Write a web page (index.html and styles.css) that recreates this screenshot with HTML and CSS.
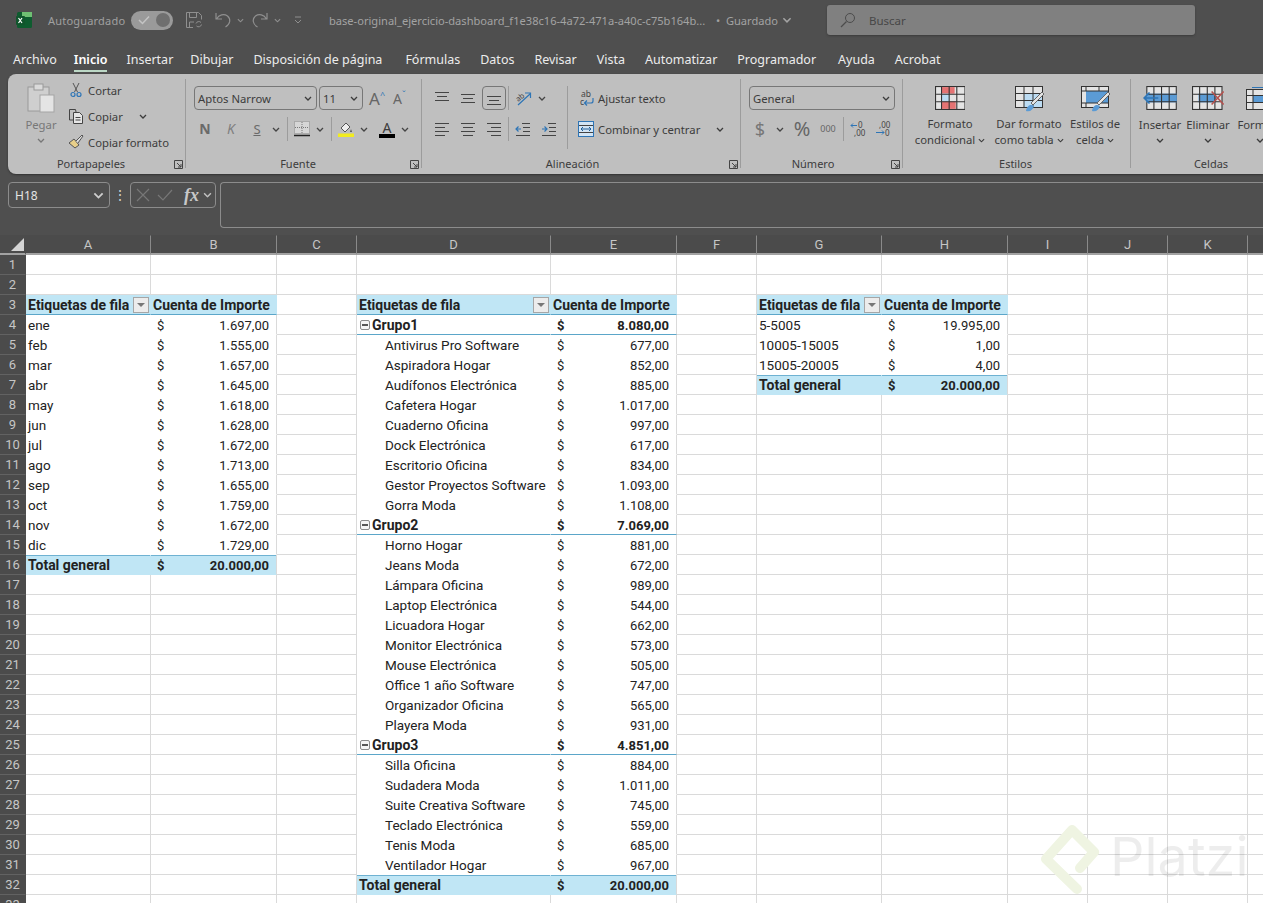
FILE: index.html
```html
<!DOCTYPE html>
<html lang="es">
<head>
  <meta charset="UTF-8">
  <title>Excel - dashboard</title>
  <link rel="stylesheet" href="styles.css">
</head>
<body>

<!-- shared icons -->
<svg class="sprite">
  <symbol id="chev" viewBox="0 0 8 5"><path d="M1 1l3 3 3-3" fill="none" stroke="currentColor" stroke-width="1.3"/></symbol>
  <symbol id="launch" viewBox="0 0 9 9"><path d="M.5.5h8v8h-8zM3 3l4 4M7 4v3H4" fill="none" stroke="#444"/></symbol>
  <symbol id="al-top" viewBox="0 0 16 16"><path d="M1 2.5h14M3 6.5h10M1 10.5h14" stroke="#444" fill="none"/></symbol>
  <symbol id="al-mid" viewBox="0 0 16 16"><path d="M1 4.5h14M3 8.5h10M1 12.5h14" stroke="#444" fill="none"/></symbol>
  <symbol id="al-bot" viewBox="0 0 16 16"><path d="M1 6.5h14M3 10.5h10M1 14.5h14" stroke="#444" fill="none"/></symbol>
  <symbol id="h-left" viewBox="0 0 16 16"><path d="M1 2.5h14M1 6.5h10M1 10.5h14M1 14.5h10" stroke="#444" fill="none"/></symbol>
  <symbol id="h-mid" viewBox="0 0 16 16"><path d="M1 2.5h14M3 6.5h10M1 10.5h14M3 14.5h10" stroke="#444" fill="none"/></symbol>
  <symbol id="h-right" viewBox="0 0 16 16"><path d="M1 2.5h14M5 6.5h10M1 10.5h14M5 14.5h10" stroke="#444" fill="none"/></symbol>
</svg>

<!-- Title bar -->
<div class="titlebar">
  <svg class="xl-logo" viewBox="0 0 16 16">
    <rect x="1" y="0" width="15" height="16" rx="1.5" fill="#0e5c2f"/>
    <rect x="6" y="0" width="10" height="5" fill="#6fbf73"/>
    <rect x="0" y="4" width="9" height="9" rx="1" fill="#10552c"/>
    <path d="M2.5 6l3.5 5M6 6l-3.5 5" stroke="#fff" stroke-width="1.2"/>
  </svg>
  <span class="autosave">Autoguardado</span>
  <span class="toggle">
    <svg viewBox="0 0 12 10" width="12" height="10"><path d="M1 5l3.5 3.5L11 1.500" fill="none" stroke="#c4c4c4" stroke-width="1.5"/></svg>
    <i class="knob"></i>
  </span>
  <svg class="qa save" viewBox="0 0 18 18"><path d="M1.500 1.500h12l3 3v4M8 16.500H1.500v-15M4.500 1.500v5h7v-5M4.500 16v-5H9" fill="none" stroke="#8f8f8f"/><path d="M11 12.500a3 3 0 0 1 5-1M16.500 13.500a3 3 0 0 1-5 1.500" fill="none" stroke="#8f8f8f"/></svg>
  <svg class="qa undo" viewBox="0 0 18 18"><path d="M2 2v6h6M2.500 8C5 3.500 10 2.500 13.500 5c3.500 3 3 8-2 11" fill="none" stroke="#8f8f8f" stroke-width="1.2"/></svg>
  <svg class="chev-s" viewBox="0 0 8 5"><use href="#chev"/></svg>
  <svg class="qa redo" viewBox="0 0 18 18"><path d="M16 2v6h-6M15.500 8C13 3.500 8 2.500 4.500 5c-3.500 3-3 8 2 11" fill="none" stroke="#8f8f8f" stroke-width="1.2"/></svg>
  <svg class="chev-s" viewBox="0 0 8 5"><use href="#chev"/></svg>
  <svg class="custom" viewBox="0 0 8 8"><path d="M1 1h6M1 4l3 3 3-3" fill="none" stroke="#8f8f8f"/></svg>
  <span class="doc-title">base-original_ejercicio-dashboard_f1e38c16-4a72-471a-a40c-c75b164b...</span>
  <span class="doc-state">•&nbsp; Guardado</span>
  <svg class="chev-t" viewBox="0 0 8 5"><use href="#chev"/></svg>
  <div class="search">
    <svg viewBox="0 0 16 16" width="16" height="16"><circle cx="10" cy="6" r="4.500" fill="none" stroke="#4c4c4c"/><path d="M6.500 9.500L1 15" stroke="#4c4c4c" stroke-width="1.300"/></svg>
    <span>Buscar</span>
  </div>
</div>

<!-- Tabs -->
<div class="tabs">
  <span>Archivo</span>
  <span class="active">Inicio</span>
  <span>Insertar</span>
  <span class="tab-dibujar">Dibujar</span>
  <span class="tab-disp">Disposición de página</span>
  <span>Fórmulas</span>
  <span>Datos</span>
  <span>Revisar</span>
  <span>Vista</span>
  <span>Automatizar</span>
  <span>Programador</span>
  <span class="tab-ayuda">Ayuda</span>
  <span>Acrobat</span>
</div>

<!-- Ribbon -->
<div class="ribbon">

  <div class="group g-clip">
    <div class="g-body">
      <div class="big pegar">
        <svg class="i-paste" viewBox="0 0 28 30">
          <rect x="1" y="4" width="21" height="24" fill="#cfcfcf" stroke="#9a9a9a"/>
          <rect x="7" y="1" width="9" height="6" fill="#dadada" stroke="#9a9a9a"/>
          <rect x="13" y="12" width="14" height="17" fill="#e4e4e4" stroke="#a5a5a5"/>
        </svg>
        <span>Pegar</span>
        <svg class="chev-r" viewBox="0 0 8 5"><use href="#chev"/></svg>
      </div>
      <div class="clip-list">
        <div class="clip-row">
          <svg viewBox="0 0 16 16" width="16" height="16"><path d="M5 1l4.500 9M11 1L6.500 10" stroke="#555" fill="none"/><circle cx="5" cy="12.500" r="2" fill="none" stroke="#2e75b6" stroke-width="1.200"/><circle cx="11" cy="12.500" r="2" fill="none" stroke="#2e75b6" stroke-width="1.200"/></svg>
          <span>Cortar</span>
        </div>
        <div class="clip-row">
          <svg viewBox="0 0 16 16" width="16" height="16"><path d="M5 12H1.500V1.500h6L8 4" fill="none" stroke="#444"/><path d="M5.500 4.500h6l3 3v8h-9zM7.500 9.500h5M7.500 12h5" fill="#e6e6e6" stroke="#444"/></svg>
          <span>Copiar</span>
          <svg class="chev-c" viewBox="0 0 8 5"><use href="#chev"/></svg>
        </div>
        <div class="clip-row">
          <svg viewBox="0 0 16 16" width="16" height="16"><path d="M1 9l5-4 5 6-4 3z" fill="#e8cf8a" stroke="#555"/><path d="M8 7l6-6 1 1-5 7" fill="#ddd" stroke="#555"/></svg>
          <span>Copiar formato</span>
        </div>
      </div>
    </div>
    <div class="g-foot"><span>Portapapeles</span><svg class="launch" viewBox="0 0 9 9"><use href="#launch"/></svg></div>
  </div>
  <i class="g-sep"></i>

  <div class="group g-font">
    <div class="g-body col">
      <div class="tool-row">
        <div class="combo c-font"><span>Aptos Narrow</span><svg viewBox="0 0 8 5"><use href="#chev"/></svg></div>
        <div class="combo c-size"><span>11</span><svg viewBox="0 0 8 5"><use href="#chev"/></svg></div>
        <span class="grow">A<sup>^</sup></span>
        <span class="shrink">A<sup>ˇ</sup></span>
      </div>
      <div class="tool-row second shift">
        <b class="tool t26 dim">N</b>
        <i class="tool t26 dim k">K</i>
        <span class="tool t22 dim s">S</span>
        <svg class="chev-b" viewBox="0 0 8 5"><use href="#chev"/></svg>
        <i class="v-sep"></i>
        <svg class="ic16" viewBox="0 0 16 16"><path d="M.5.5h15v12H.5z" fill="#d6d6d6" stroke="#8a8a8a" stroke-dasharray="1 1"/><path d="M8 1v11M1 6.500h14" stroke="#777" stroke-dasharray="1 1"/><path d="M0 14.500h16" stroke="#222" stroke-width="1.500"/></svg>
        <svg class="chev-b" viewBox="0 0 8 5"><use href="#chev"/></svg>
        <i class="v-sep"></i>
        <svg class="ic16" viewBox="0 0 16 16"><path d="M3 7l5-5 4 4-5 5z" fill="#eee" stroke="#555"/><path d="M13 8l1 3h-2z" fill="#555"/><rect y="12.500" width="16" height="3.500" fill="#f2ec1e"/></svg>
        <svg class="chev-b" viewBox="0 0 8 5"><use href="#chev"/></svg>
        <span class="color-a">A</span>
        <svg class="chev-b" viewBox="0 0 8 5"><use href="#chev"/></svg>
      </div>
    </div>
    <div class="g-foot"><span>Fuente</span><svg class="launch" viewBox="0 0 9 9"><use href="#launch"/></svg></div>
  </div>
  <i class="g-sep"></i>

  <div class="group g-align">
    <div class="g-body">
      <div class="al-left">
        <div class="tool-row">
          <svg class="tool t26 ic" viewBox="-5 0 26 16"><use href="#al-top" width="16" height="16"/></svg>
          <svg class="tool t26 ic" viewBox="-5 0 26 16"><use href="#al-mid" width="16" height="16"/></svg>
          <span class="al-selected"><svg viewBox="0 0 16 16" width="16" height="16"><use href="#al-bot"/></svg></span>
          <i class="v-sep narrow"></i>
          <svg class="ic17" viewBox="0 0 17 17"><text x="1" y="10" font-size="7.500" fill="#444" font-family="Noto Sans, sans-serif" transform="rotate(-40 5 8)">ab</text><path d="M3 15L15 4M10 3h5.500v5" fill="none" stroke="#2e75b6" stroke-width="1.200"/></svg>
          <svg class="chev-b" viewBox="0 0 8 5"><use href="#chev"/></svg>
        </div>
        <div class="tool-row second">
          <svg class="tool t26 ic" viewBox="-5 0 26 16"><use href="#h-left" width="16" height="16"/></svg>
          <svg class="tool t26 ic" viewBox="-5 0 26 16"><use href="#h-mid" width="16" height="16"/></svg>
          <svg class="tool t26 ic" viewBox="-5 0 26 16"><use href="#h-right" width="16" height="16"/></svg>
          <i class="v-sep"></i>
          <svg class="ic16" viewBox="0 0 16 16"><path d="M7 2.500h8M8 6.500h7M8 10.500h7M1 14.500h14" stroke="#444"/><path d="M6 8H1M3.500 5.500L1 8l2.500 2.500" fill="none" stroke="#2e75b6" stroke-width="1.200"/></svg>
          <svg class="ic16 gap10" viewBox="0 0 16 16"><path d="M7 2.500h8M8 6.500h7M8 10.500h7M1 14.500h14" stroke="#444"/><path d="M1 8h5M3.500 5.500L6 8l-2.500 2.500" fill="none" stroke="#2e75b6" stroke-width="1.200"/></svg>
        </div>
      </div>
      <i class="v-sep tall"></i>
      <div class="al-right">
        <div class="clip-row">
          <svg class="ic-wrap" viewBox="0 0 16 18" width="16" height="18"><text x="3" y="8" font-size="8.500" fill="#444" font-family="Noto Sans, sans-serif">ab</text><text x="2" y="16" font-size="8.500" fill="#444" font-family="Noto Sans, sans-serif">c</text><path d="M15 9v3a2 2 0 0 1-2 2H7M9 11.500L6.500 14 9 16.500" fill="none" stroke="#2e75b6" stroke-width="1.200"/></svg>
          <span>Ajustar texto</span>
        </div>
        <div class="clip-row">
          <svg viewBox="0 0 16 16" width="16" height="16"><rect x=".5" y=".5" width="15" height="15" fill="#d3e5f5" stroke="#2e75b6"/><path d="M1 4.500h14M1 11.500h14" stroke="#444"/><path d="M3 8h10M5 6L3 8l2 2M11 6l2 2-2 2" fill="none" stroke="#1f5f99"/></svg>
          <span>Combinar y centrar</span>
          <svg class="chev-m" viewBox="0 0 8 5"><use href="#chev"/></svg>
        </div>
      </div>
    </div>
    <div class="g-foot"><span>Alineación</span><svg class="launch" viewBox="0 0 9 9"><use href="#launch"/></svg></div>
  </div>
  <i class="g-sep"></i>

  <div class="group g-num">
    <div class="g-body col">
      <div class="tool-row">
        <div class="combo c-num"><span>General</span><svg viewBox="0 0 8 5"><use href="#chev"/></svg></div>
      </div>
      <div class="tool-row second">
        <span class="tool t20 cur">$</span>
        <svg class="chev-b" viewBox="0 0 8 5"><use href="#chev"/></svg>
        <span class="tool t24 pct">%</span>
        <span class="tool t28 mil">000</span>
        <i class="v-sep"></i>
        <svg class="ic16" viewBox="0 0 16 16"><text x="8" y="7" font-size="8" fill="#444" font-family="Noto Sans, sans-serif">0</text><text x="4" y="15" font-size="8" fill="#444" font-family="Noto Sans, sans-serif">,00</text><path d="M7 4.500H1M3 2.500l-2 2 2 2" fill="none" stroke="#2e75b6"/></svg>
        <svg class="ic16 gap9" viewBox="0 0 16 16"><text x="4" y="7" font-size="8" fill="#444" font-family="Noto Sans, sans-serif">,00</text><text x="10" y="15" font-size="8" fill="#444" font-family="Noto Sans, sans-serif">0</text><path d="M1 11.500h8M7 9.500l2 2-2 2" fill="none" stroke="#2e75b6"/></svg>
      </div>
    </div>
    <div class="g-foot"><span>Número</span><svg class="launch" viewBox="0 0 9 9"><use href="#launch"/></svg></div>
  </div>
  <i class="g-sep"></i>

  <div class="group g-styles">
    <div class="g-body">
      <div class="big b79">
        <svg class="i-tbl" viewBox="0 0 28 22">
          <rect x=".5" y=".5" width="27" height="21" fill="#e4e4e4" stroke="#333"/>
          <rect x="6" y="1" width="12" height="6" fill="#e57373"/><rect x="6" y="14" width="13" height="7" fill="#e57373"/><rect x="6" y="7" width="7" height="7" fill="#bcdcf3"/>
          <path d="M1 7.500h27M1 14.500h27M6 1v21M13 1v21M20 1v21" stroke="#333" fill="none"/>
        </svg>
        <span class="two">Formato<br>condicional <svg class="chev-i" viewBox="0 0 8 5"><use href="#chev"/></svg></span>
      </div>
      <div class="big b76">
        <svg class="i-brush" viewBox="0 0 30 26">
          <rect x=".5" y=".5" width="27" height="21" fill="#e4e4e4" stroke="#333"/>
          <rect x="9" y="7" width="18" height="14" fill="#bcdcf3"/>
          <path d="M1 7.500h27M1 14.500h27M9 1v21M18 1v21" stroke="#333" fill="none"/>
          <path d="M16 17L27 6l2 2-11 11z" fill="#e4e4e4" stroke="#666"/>
          <path d="M11 25c1-6 5-7 8-5-1 4-4 6-8 5z" fill="#5b9bd5"/>
        </svg>
        <span class="two">Dar formato<br>como tabla <svg class="chev-i" viewBox="0 0 8 5"><use href="#chev"/></svg></span>
      </div>
      <div class="big b56">
        <svg class="i-brush" viewBox="0 0 30 26">
          <rect x=".5" y=".5" width="27" height="21" fill="#e4e4e4" stroke="#333"/>
          <rect x="5" y="5" width="22" height="12" fill="#5b9bd5"/>
          <path d="M1 5h26M5 1v4M18 1v4M1 17h26M5 17v5" stroke="#333" fill="none"/>
          <path d="M16 17L27 6l2 2-11 11z" fill="#e4e4e4" stroke="#666"/>
          <path d="M11 25c1-6 5-7 8-5-1 4-4 6-8 5z" fill="#5b9bd5"/>
        </svg>
        <span class="two">Estilos de<br>celda <svg class="chev-i" viewBox="0 0 8 5"><use href="#chev"/></svg></span>
      </div>
    </div>
    <div class="g-foot"><span>Estilos</span></div>
  </div>
  <i class="g-sep"></i>

  <div class="group g-cells">
    <div class="g-body">
      <div class="big b48">
        <svg class="i-tbl" viewBox="0 0 32 22">
          <rect x="3.500" y=".5" width="27" height="21" fill="#e4e4e4" stroke="#333"/>
          <rect x="3" y="7" width="28" height="8" fill="#5b9bd5"/>
          <path d="M4 7.500h27M4 14.500h27M10 1v21M17 1v21M24 1v21" stroke="#333" fill="none"/>
          <path d="M14 11H1M6 6l-5 5 5 5" fill="none" stroke="#2e75b6" stroke-width="1.500"/>
        </svg>
        <span>Insertar</span>
        <svg class="chev-r" viewBox="0 0 8 5"><use href="#chev"/></svg>
      </div>
      <div class="big b48">
        <svg class="i-tbl" viewBox="0 0 30 22">
          <rect x=".5" y=".5" width="27" height="21" fill="#e4e4e4" stroke="#333"/>
          <rect x="6" y="7" width="16" height="8" fill="#5b9bd5"/>
          <path d="M1 7.500h26M1 14.500h26M7 1v21M14 1v21M21 1v21" stroke="#333" fill="none"/>
          <path d="M18 5l11 12M29 5L18 17" stroke="#b5524f" stroke-width="1.500"/>
        </svg>
        <span>Eliminar</span>
        <svg class="chev-r" viewBox="0 0 8 5"><use href="#chev"/></svg>
      </div>
      <div class="big b56">
        <svg class="i-tbl" viewBox="0 0 28 24">
          <path d="M6 1.500h20" stroke="#2e75b6"/>
          <rect x=".5" y="3.500" width="27" height="20" fill="#e4e4e4" stroke="#333"/>
          <rect x="7" y="9" width="21" height="8" fill="#5b9bd5"/>
          <path d="M1 9.500h27M1 16.500h27M7 4v20" stroke="#333" fill="none"/>
        </svg>
        <span>Formato</span>
        <svg class="chev-r" viewBox="0 0 8 5"><use href="#chev"/></svg>
      </div>
    </div>
    <div class="g-foot"><span>Celdas</span></div>
  </div>
</div>

<!-- Formula bar -->
<div class="formula-bar">
  <div class="name-box"><span>H18</span><svg viewBox="0 0 8 5"><use href="#chev"/></svg></div>
  <span class="dots">⋮</span>
  <div class="fx-box">
    <svg viewBox="0 0 14 14" width="14" height="14"><path d="M1 1l12 12M13 1L1 13" stroke="#777" stroke-width="1.200"/></svg>
    <svg viewBox="0 0 16 14" width="16" height="14"><path d="M1 7l5 5L15 2" fill="none" stroke="#777" stroke-width="1.200"/></svg>
    <span class="fx">fx</span>
    <svg class="fx-chev" viewBox="0 0 8 5"><use href="#chev"/></svg>
  </div>
  <div class="formula-input"></div>
</div>

<!-- Sheet -->
<div class="sheet">
  <table class="grid">
    <colgroup>
      <col class="c-rh"><col class="c125"><col class="c126"><col class="c80"><col class="c194"><col class="c126"><col class="c80">
      <col class="c125"><col class="c126"><col class="c80"><col class="c80"><col class="c80"><col class="c80">
    </colgroup>
    <tbody id="sheetBody"></tbody>
  </table>
  <!-- watermark -->
  <div class="watermark">
    <svg viewBox="0 0 60 72" width="60" height="72"><path d="M37 66L6 36 32 7l22 22-14 16" fill="none" stroke="#eff4e2" stroke-width="10" stroke-linejoin="round" stroke-linecap="round"/></svg>
    <span>Platzi</span>
  </div>
</div>

<script>
  const columns = ["A", "B", "C", "D", "E", "F", "G", "H", "I", "J", "K", ""];
  const totalRows = 33;

  // type: h = header, g = group, t = total, i = indented item, blank = plain row
  const pivots = [
    { col: 0, row: 3, rows: [
      ["Etiquetas de fila", "Cuenta de Importe", "h"],
      ["ene", "1.697,00"], ["feb", "1.555,00"], ["mar", "1.657,00"], ["abr", "1.645,00"],
      ["may", "1.618,00"], ["jun", "1.628,00"], ["jul", "1.672,00"], ["ago", "1.713,00"],
      ["sep", "1.655,00"], ["oct", "1.759,00"], ["nov", "1.672,00"], ["dic", "1.729,00"],
      ["Total general", "20.000,00", "t"]
    ]},
    { col: 3, row: 3, rows: [
      ["Etiquetas de fila", "Cuenta de Importe", "h"],
      ["Grupo1", "8.080,00", "g"],
      ["Antivirus Pro Software", "677,00", "i"], ["Aspiradora Hogar", "852,00", "i"],
      ["Audífonos Electrónica", "885,00", "i"], ["Cafetera Hogar", "1.017,00", "i"],
      ["Cuaderno Oficina", "997,00", "i"], ["Dock Electrónica", "617,00", "i"],
      ["Escritorio Oficina", "834,00", "i"], ["Gestor Proyectos Software", "1.093,00", "i"],
      ["Gorra Moda", "1.108,00", "i"],
      ["Grupo2", "7.069,00", "g"],
      ["Horno Hogar", "881,00", "i"], ["Jeans Moda", "672,00", "i"],
      ["Lámpara Oficina", "989,00", "i"], ["Laptop Electrónica", "544,00", "i"],
      ["Licuadora Hogar", "662,00", "i"], ["Monitor Electrónica", "573,00", "i"],
      ["Mouse Electrónica", "505,00", "i"], ["Office 1 año Software", "747,00", "i"],
      ["Organizador Oficina", "565,00", "i"], ["Playera Moda", "931,00", "i"],
      ["Grupo3", "4.851,00", "g"],
      ["Silla Oficina", "884,00", "i"], ["Sudadera Moda", "1.011,00", "i"],
      ["Suite Creativa Software", "745,00", "i"], ["Teclado Electrónica", "559,00", "i"],
      ["Tenis Moda", "685,00", "i"], ["Ventilador Hogar", "967,00", "i"],
      ["Total general", "20.000,00", "t"]
    ]},
    { col: 6, row: 3, rows: [
      ["Etiquetas de fila", "Cuenta de Importe", "h"],
      ["5-5005", "19.995,00"], ["10005-15005", "1,00"], ["15005-20005", "4,00"],
      ["Total general", "20.000,00", "t"]
    ]}
  ];

  function labelCell(text, type) {
    if (type === "h") return `<td class="piv head">${text}<span class="filter"></span></td>`;
    if (type === "g") return `<td class="piv group-row"><span class="minus"></span>${text}</td>`;
    if (type === "t") return `<td class="piv total">${text}</td>`;
    if (type === "i") return `<td class="piv item">${text}</td>`;
    return `<td class="piv">${text}</td>`;
  }

  function valueCell(text, type) {
    if (type === "h") return `<td class="piv head end">${text}</td>`;
    const cls = type === "g" ? "group-row" : type === "t" ? "total" : "";
    return `<td class="piv end ${cls}"><div class="acct"><span>$</span><span>${text}</span></div></td>`;
  }

  function buildSheet() {
    const cells = {};
    pivots.forEach(p => {
      p.rows.forEach((r, i) => {
        cells[(p.row + i) + "-" + p.col] = labelCell(r[0], r[2]);
        cells[(p.row + i) + "-" + (p.col + 1)] = valueCell(r[1], r[2]);
      });
    });

    let html = `<tr class="col-head"><th class="corner"><i></i></th>`;
    columns.forEach(c => { html += `<th>${c}</th>`; });
    html += `</tr>`;

    for (let r = 1; r <= totalRows; r++) {
      html += `<tr><th class="row-head">${r}</th>`;
      columns.forEach((c, i) => { html += cells[r + "-" + i] || "<td></td>"; });
      html += `</tr>`;
    }
    document.getElementById("sheetBody").innerHTML = html;
  }

  buildSheet();
</script>

</body>
</html>
```

FILE: styles.css
```css
* {
  box-sizing: border-box;
}
html, body {
  height: 100%;
}
body {
  margin: 0;
  overflow: hidden;
  background: #4f4f4f;
  font-family: "Noto Sans", sans-serif;
  font-size: 11.3px;
  color: #3c3c3c;
}
.sprite {
  display: none;
}
svg {
  display: block;
  flex: none;
}

/* title bar */
.titlebar {
  height: 38px;
  display: flex;
  align-items: center;
  padding: 2px 0 0 16px;
  color: #a3a3a3;
}
.xl-logo {
  width: 16px;
  height: 16px;
}
.autosave {
  margin-left: 16px;
  width: 83px;
  font-size: 11px;
  color: #a0a0a0;
  letter-spacing: .2px;
}
.toggle {
  width: 42px;
  height: 19px;
  border-radius: 10px;
  background: #9a9a9a;
  display: flex;
  align-items: center;
  justify-content: space-between;
  padding: 0 3px 0 7px;
}
.knob {
  width: 14px;
  height: 14px;
  border-radius: 50%;
  background: #6f6f6f;
}
.qa {
  width: 18px;
  height: 18px;
}
.save {
  margin-left: 12px;
}
.undo {
  margin-left: 11px;
}
.redo {
  margin-left: 7px;
}
.chev-s {
  width: 7px;
  height: 5px;
  margin-left: 5px;
  color: #8f8f8f;
}
.custom {
  width: 8px;
  height: 8px;
  margin-left: 13px;
}
.doc-title {
  margin-left: 27px;
  width: 380px;
  font-size: 11.1px;
  white-space: nowrap;
}
.doc-state {
  margin-left: 7px;
  font-size: 11.1px;
  width: 66px;
  white-space: nowrap;
}
.chev-t {
  width: 10px;
  height: 6px;
  color: #a3a3a3;
}
.search {
  margin-left: 35px;
  width: 368px;
  height: 30px;
  background: #808080;
  border-radius: 3px;
  box-shadow: 0 1px 2px #3c3c3c;
  display: flex;
  align-items: center;
  gap: 13px;
  padding-left: 13px;
  font-size: 11.5px;
  color: #474747;
}

/* tabs */
.tabs {
  height: 36px;
  display: flex;
  gap: 20px;
  padding: 13px 0 0 13px;
  font-size: 12.5px;
  color: #ececec;
  white-space: nowrap;
}
.tabs span {
  height: 21px;
  line-height: 18px;
}
.tabs .active {
  font-weight: 600;
  color: #fff;
  border-bottom: 2px solid #bcd8c6;
  margin: 0 -1px 0 -3px;
}
.tabs .tab-dibujar {
  margin-left: -3px;
}
.tabs .tab-disp {
  margin-right: 3px;
}
.tabs .tab-ayuda {
  margin-left: 2px;
}

/* ribbon */
.ribbon {
  height: 100px;
  margin-left: 8px;
  background: #bfbfbf;
  border-radius: 8px 0 0 8px;
  box-shadow: 0 1px 2px #333;
  display: flex;
  overflow: hidden;
}
.group {
  flex: none;
  display: flex;
  flex-direction: column;
}
.g-clip { width: 177px; }
.g-font { width: 235px; }
.g-align { width: 318px; }
.g-num { width: 161px; }
.g-styles { width: 227px; }
.g-cells { width: 162px; }
.g-sep {
  flex: none;
  width: 1px;
  height: 89px;
  margin-top: 5px;
  background: #9c9c9c;
}
.g-body {
  height: 82px;
  display: flex;
}
.g-body.col {
  flex-direction: column;
  padding-top: 12px;
  gap: 7px;
}
.g-foot {
  height: 16px;
  display: flex;
  align-items: center;
  padding-right: 2px;
  font-size: 11px;
  line-height: 16px;
}
.g-foot span {
  flex: 1;
  text-align: center;
}
.g-align .g-foot span, .g-num .g-foot span {
  padding-right: 6px;
}
.launch {
  width: 9px;
  height: 9px;
}

.big {
  flex: none;
  display: flex;
  flex-direction: column;
  align-items: center;
  white-space: nowrap;
  line-height: 16px;
  padding-top: 12px;
}
.big .i-tbl {
  height: 24px;
  width: auto;
  margin-bottom: 6px;
}
.big .i-brush {
  width: 30px;
  height: 26px;
  margin: 0 0 4px 1px;
}
.b79 { width: 79px; padding-right: 3px; }
.b76 { width: 76px; }
.b56 { width: 56px; }
.b48 { width: 48px; }
.g-styles .g-body { padding-left: 9px; }
.g-cells .g-body { padding-left: 5px; }
.g-cells .big > span { margin-top: 1px; }
.two {
  text-align: center;
}
.chev-i {
  display: inline-block;
  width: 7px;
  height: 5px;
  vertical-align: 1px;
}
.chev-r {
  width: 8px;
  height: 5px;
  margin-top: 5px;
}

.pegar {
  width: 50px;
  margin-left: 8px;
  padding-top: 9px;
  color: #777;
}
.i-paste {
  width: 28px;
  height: 30px;
  margin-bottom: 4px;
}
.clip-list {
  margin: 3px 0 0 2px;
}
.clip-row {
  height: 26px;
  display: flex;
  align-items: center;
  gap: 4px;
  white-space: nowrap;
}
.chev-c {
  width: 8px;
  height: 5px;
  margin-left: 12px;
}

.tool-row {
  height: 24px;
  display: flex;
  align-items: center;
  flex: none;
}
.tool-row.second.shift {
  margin-left: -2px;
}
.g-font .g-body {
  padding-left: 8px;
}
.combo {
  height: 24px;
  border: 1px solid #777;
  border-radius: 4px;
  display: flex;
  align-items: center;
  justify-content: space-between;
  padding: 0 4px 0 3px;
  flex: none;
}
.combo svg {
  width: 8px;
  height: 5px;
}
.c-font { width: 123px; }
.c-size { width: 44px; margin-left: 2px; }
.c-num { width: 146px; margin-left: 8px; }
.grow, .shrink {
  color: #666;
  white-space: nowrap;
}
.grow {
  font-size: 17px;
  margin-left: 6px;
}
.shrink {
  font-size: 14px;
  margin-left: 8px;
}
.grow sup, .shrink sup {
  font-size: 9px;
  color: #2e75b6;
  line-height: 0;
}
.tool {
  flex: none;
  display: block;
  text-align: center;
  height: 16px;
  line-height: 16px;
}
.t20 { width: 20px; }
.t22 { width: 22px; }
.t24 { width: 24px; }
.t26 { width: 26px; }
.t28 { width: 28px; }
.dim {
  font-size: 14px;
  color: #6a6a6a;
}
.k {
  font-style: italic;
  color: #808080;
}
.s {
  padding-left: 4px;
  font-size: 13px;
  text-decoration: underline;
}
.chev-b {
  width: 20px;
  height: 5px;
  color: #444;
}
.v-sep {
  flex: none;
  width: 1px;
  height: 24px;
  margin: 0 6px 0 1px;
  background: #9c9c9c;
}
.v-sep.narrow {
  margin-left: 2px;
}
.v-sep.tall {
  height: 63px;
  margin: 0 10px 0 0;
}
.ic16 {
  width: 16px;
  height: 16px;
  flex: none;
  overflow: visible;
}
.ic17 {
  width: 17px;
  height: 17px;
  overflow: visible;
}
.ic-wrap {
  overflow: visible;
}
.gap10 { margin-left: 10px; }
.gap9 { margin-left: 9px; }
.color-a {
  width: 16px;
  margin-left: 5px;
  text-align: center;
  font-size: 14px;
  line-height: 13px;
  border-bottom: 4px solid #000;
}

.g-align .g-body {
  padding-top: 12px;
}
.al-left {
  width: 138px;
  margin-left: 7px;
  display: flex;
  flex-direction: column;
  gap: 7px;
}
.al-selected {
  width: 24px;
  height: 24px;
  margin-left: 1px;
  border: 1px solid #777;
  border-radius: 4px;
  display: flex;
  align-items: center;
  justify-content: center;
  flex: none;
}
.al-right .clip-row {
  height: 24px;
}
.al-right .clip-row + .clip-row {
  margin-top: 7px;
}
.chev-m {
  width: 8px;
  height: 5px;
  margin-left: 12px;
}

.g-num .second {
  margin-left: 9px;
}
.cur {
  font-size: 18px;
  color: #777;
}
.pct {
  font-size: 20px;
  color: #666;
}
.mil {
  font-size: 9px;
  color: #666;
}

/* formula bar */
.formula-bar {
  height: 61px;
  display: flex;
  align-items: flex-start;
  padding: 8px 0 0 8px;
}
.name-box {
  width: 102px;
  height: 26px;
  border: 1px solid #8c8c8c;
  border-radius: 4px;
  display: flex;
  align-items: center;
  justify-content: space-between;
  padding: 0 5px 0 6px;
  font-size: 12px;
  color: #e4e4e4;
}
.name-box svg {
  width: 11px;
  height: 7px;
  color: #cfcfcf;
}
.dots {
  width: 20px;
  height: 26px;
  line-height: 26px;
  text-align: center;
  font-size: 14px;
  color: #d0d0d0;
}
.fx-box {
  width: 86px;
  height: 26px;
  border: 1px solid #8c8c8c;
  border-radius: 4px;
  display: flex;
  align-items: center;
  gap: 7px;
  padding-left: 5px;
}
.fx {
  margin-left: 4px;
  font-family: "Liberation Serif", serif;
  font-style: italic;
  font-weight: 700;
  font-size: 18px;
  line-height: 20px;
  color: #c8c8c8;
}
.fx-chev {
  width: 9px;
  height: 6px;
  margin-left: -3px;
  color: #c0c0c0;
}
.formula-input {
  flex: 1;
  height: 46px;
  margin-left: 4px;
  border: 1px solid #8c8c8c;
  border-right: 0;
  border-radius: 4px 0 0 4px;
}

/* sheet */
.sheet {
  position: relative;
  height: 668px;
  overflow: hidden;
  background: #fff;
}
.grid {
  table-layout: fixed;
  width: 1328px;
  border-spacing: 0;
  font-family: Roboto, sans-serif;
  font-size: 13.5px;
  line-height: 17px;
  color: #222;
}
.c-rh { width: 26px; }
.c80 { width: 80px; }
.c125 { width: 125px; }
.c126 { width: 126px; }
.c194 { width: 194px; }
.grid th, .grid td {
  height: 20px;
  padding: 0;
  overflow: hidden;
  white-space: nowrap;
}
.grid td {
  padding: 2px 2px 0;
  border-right: 1px solid #dadada;
  border-bottom: 1px solid #dadada;
}
.grid th {
  font-weight: 400;
  font-size: 13px;
  background: #4b4b4b;
  color: #c6c6c6;
  text-align: center;
}
.col-head th {
  line-height: 17px;
  border-right: 1px solid #8a8a8a;
  border-bottom: 2px solid #a2a2a2;
  border-top: 1px solid #4b4b4b;
}
.col-head .corner {
  border-right: 1px solid #4b4b4b;
  position: relative;
}
.corner i {
  position: absolute;
  right: 1px;
  bottom: 2px;
  border-style: solid;
  border-width: 0 0 13px 13px;
  border-color: transparent transparent #d4d4d4 transparent;
}
.row-head {
  border-bottom: 1px solid #626262;
  border-right: 1px solid #4b4b4b;
}

/* pivot tables */
.grid td.piv {
  border-right-color: #fff;
  border-bottom-color: #fff;
}
.grid td.piv.end {
  border-right-color: #dadada;
}
.grid td.head {
  background: #c0e6f5;
  font-size: 14px;
  font-weight: 700;
  border-right-color: #c0e6f5;
  border-bottom-color: #5ba6c9;
  position: relative;
}
.grid td.head.end {
  border-right-color: #c0e6f5;
}
.grid td.group-row {
  font-size: 14px;
  font-weight: 700;
  border-bottom-color: #5ba6c9;
}
.grid td.total {
  background: #c0e6f5;
  font-size: 14px;
  font-weight: 700;
  border-right-color: #c0e6f5;
  border-bottom-color: #c0e6f5;
  box-shadow: inset 0 1px #6fb2d2;
}
.grid td.item {
  padding-left: 28px;
}
.acct {
  display: flex;
  justify-content: space-between;
  padding: 0 5px 0 4px;
  font-size: 13px;
}
.filter {
  position: absolute;
  right: 1px;
  top: 2px;
  width: 16px;
  height: 16px;
  background: #ececec;
  border: 1px solid #a6a6a6;
}
.filter::after {
  content: "";
  position: absolute;
  left: 3px;
  top: 5px;
  border-style: solid;
  border-width: 4px 4px 0;
  border-color: #777 transparent transparent;
}
.minus {
  display: inline-block;
  position: relative;
  width: 10px;
  height: 10px;
  margin: 0 2px 0 1px;
  border: 1px solid #8a8a8a;
  border-radius: 2px;
  background: #f4f4f4;
}
.minus::after {
  content: "";
  position: absolute;
  left: 1px;
  right: 1px;
  top: 3px;
  height: 2px;
  background: #555;
}

/* watermark */
.watermark {
  position: absolute;
  left: 1040px;
  top: 588px;
  display: flex;
  align-items: center;
  gap: 10px;
  font-family: Inter, sans-serif;
  font-size: 54px;
  color: rgba(0, 0, 0, .07);
}
.watermark span {
  margin-top: -6px;
}
```
